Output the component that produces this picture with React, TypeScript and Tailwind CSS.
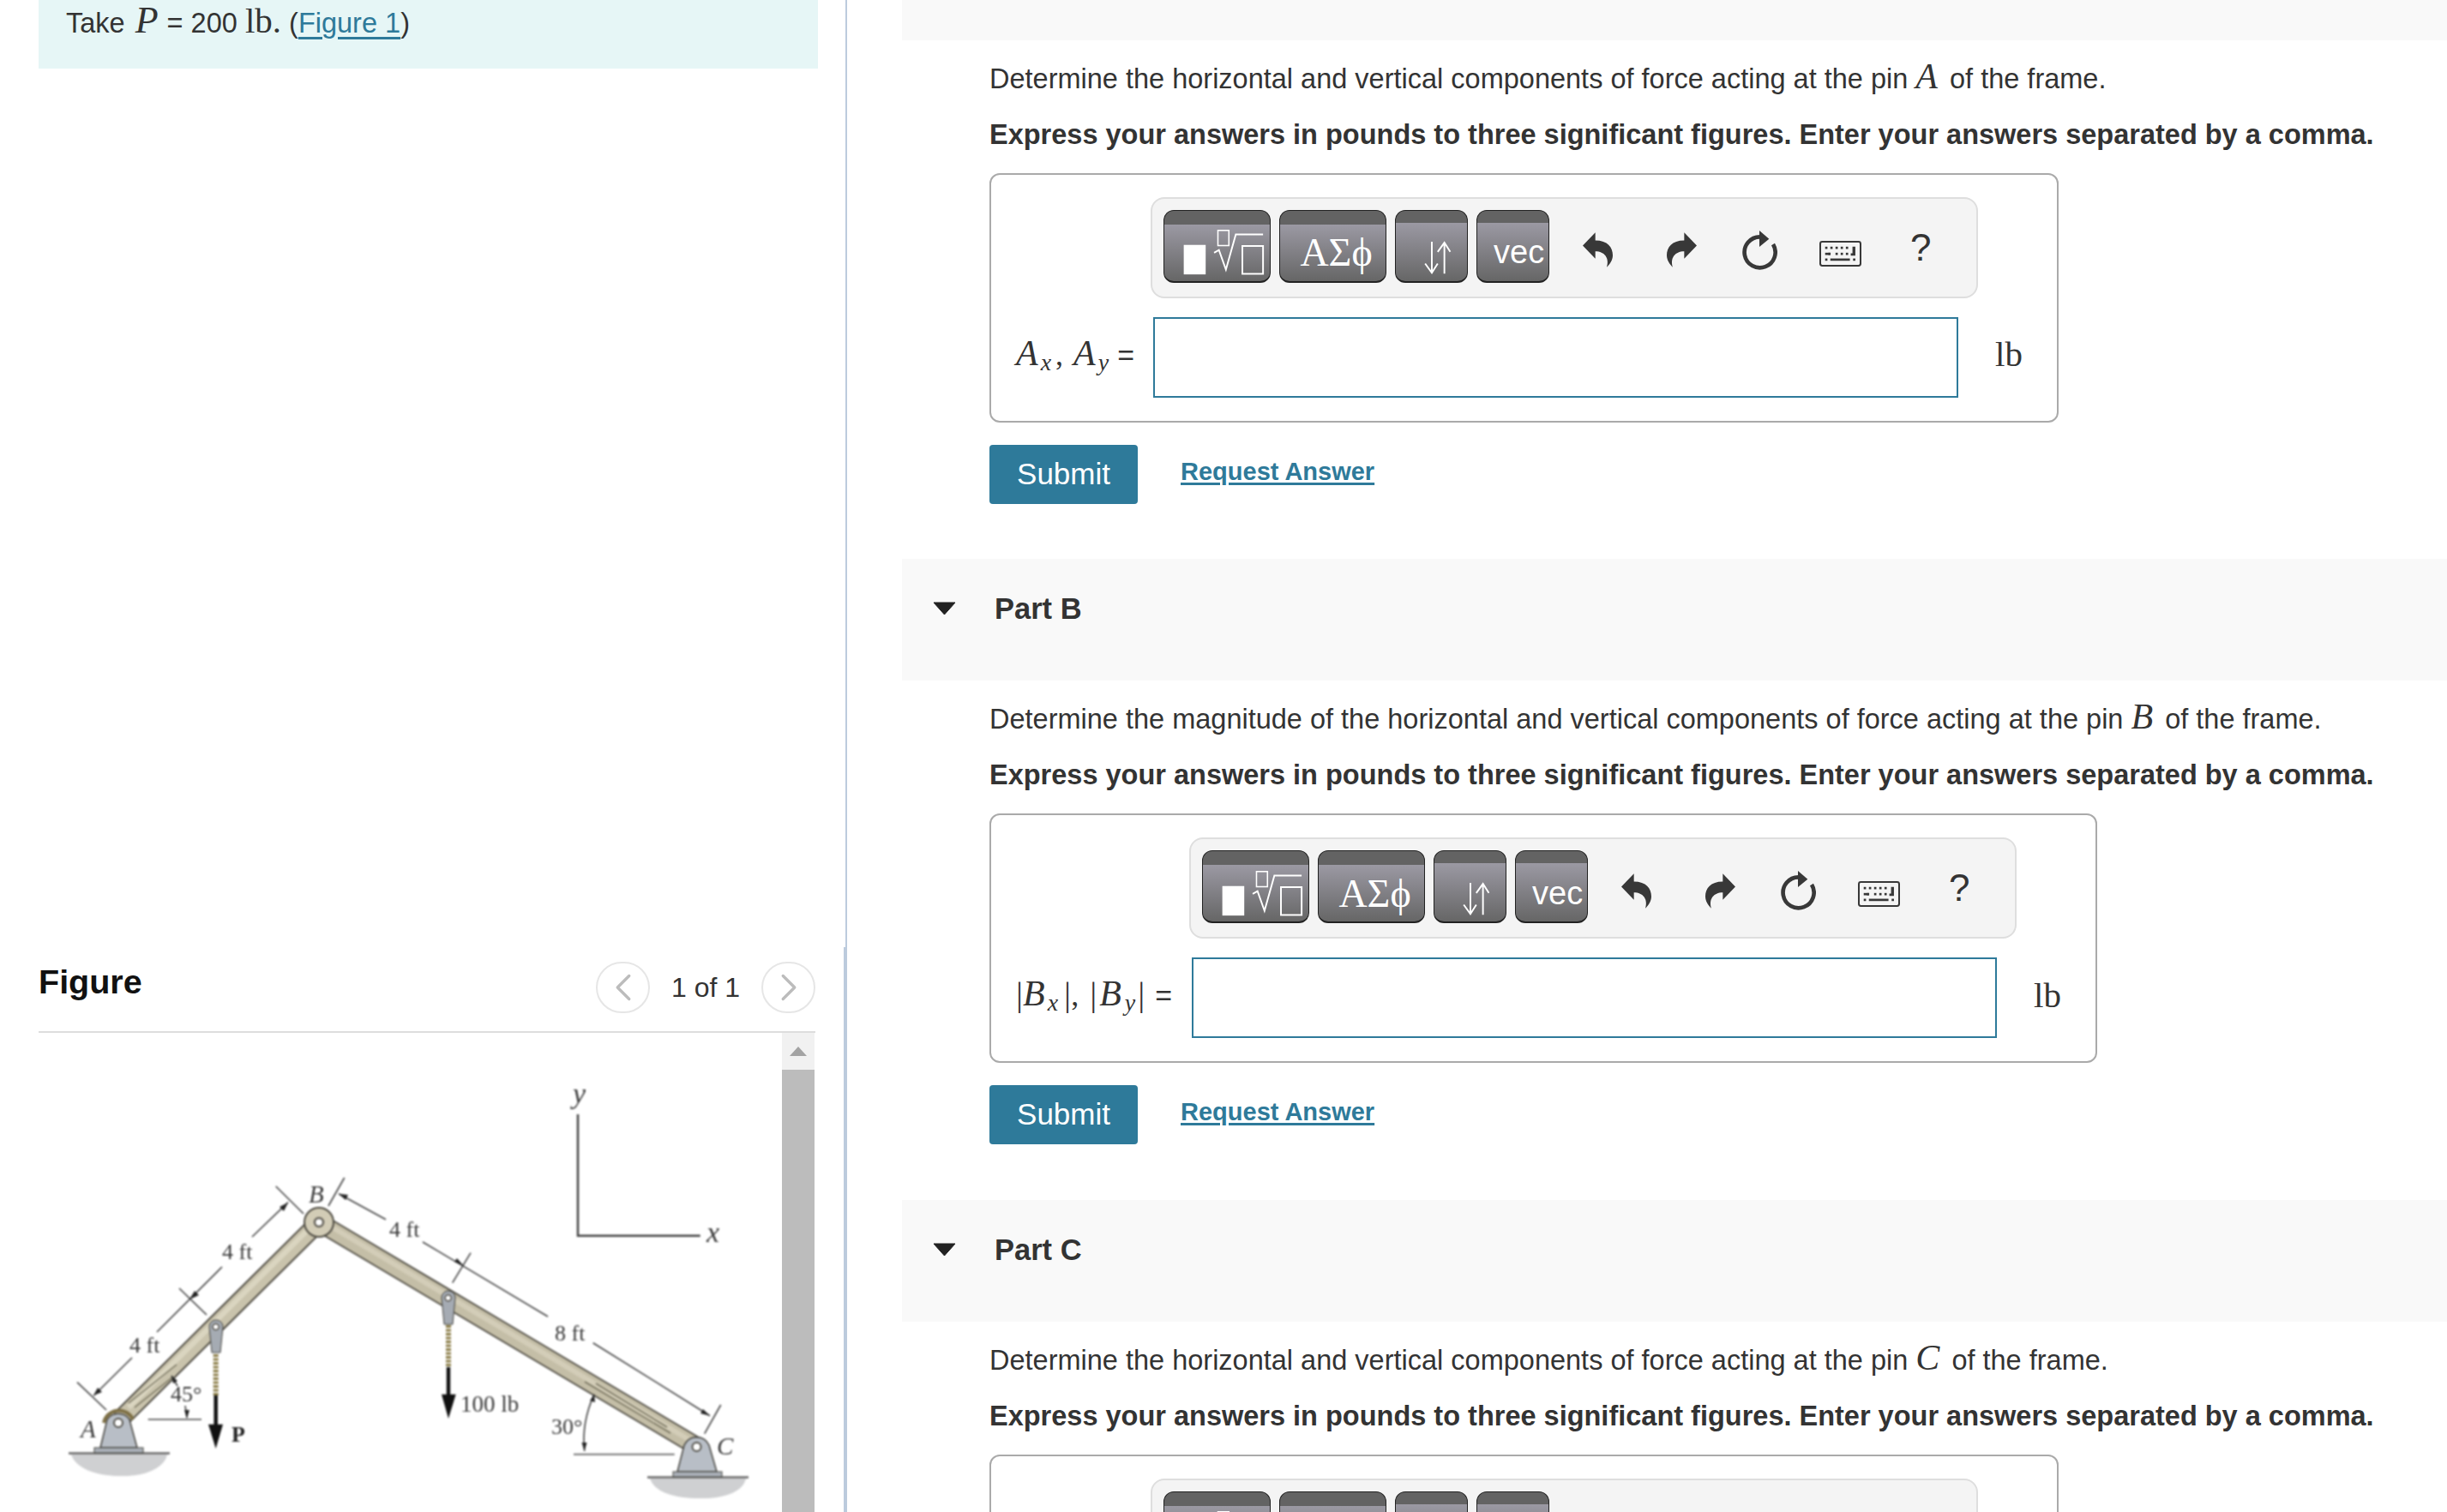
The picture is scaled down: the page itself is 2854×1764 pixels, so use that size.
import React from "react";
import { ChevronLeft, ChevronRight } from "lucide-react";

const Serif = ({ children, className = "" }: { children: React.ReactNode; className?: string }) => (
  <span className={`font-['Liberation_Serif'] ${className}`}>{children}</span>
);

const Mi = ({ children }: { children: React.ReactNode }) => (
  <span className="font-['Liberation_Serif'] italic text-[42px] leading-none">{children}</span>
);

const Sub = ({ children, className = "" }: { children: React.ReactNode; className?: string }) => (
  <span className={`font-['Liberation_Serif'] italic text-[28px] leading-none translate-y-[6px] ${className}`}>
    {children}
  </span>
);

const Bar = ({ className = "" }: { className?: string }) => (
  <span className={`font-['Liberation_Serif'] text-[40px] leading-none ${className}`}>|</span>
);

const btn =
  "h-[85px] rounded-[12px] border border-b-2 border-[#222] flex items-center shrink-0 text-white overflow-hidden";

const ToolButtons = () => (
  <div className="flex gap-[10px]">
    <div className={`${btn} w-[125px] bg-[linear-gradient(#636363_0_16px,#9b99a3_16px,#666666_100%)]`}>
      <svg width="125" height="85" viewBox="0 0 125 85" fill="none">
        <rect x="23" y="41.7" width="26" height="35" fill="#fff" />
        <rect x="63.5" y="24.5" width="13" height="18" stroke="#fff" strokeWidth="1.6" />
        <path d="M59 51 L64.7 47.7 L73 71 L84.7 29.3 H117" stroke="#fff" strokeWidth="2" />
        <rect x="92.5" y="43" width="24.5" height="33" stroke="#fff" strokeWidth="2" />
      </svg>
    </div>
    <div
      className={`${btn} w-[125px] pt-[16px] pl-[8px] justify-center bg-[linear-gradient(#636363_0_16px,#9b99a3_16px,#666666_100%)] font-['Liberation_Serif'] text-[46px]`}
    >
      ΑΣϕ
    </div>
    <div className={`${btn} w-[85px] bg-[linear-gradient(#636363_0_14px,#9b99a3_14px,#666666_100%)]`}>
      <svg width="85" height="85" viewBox="0 0 85 85" fill="none" stroke="#fff" strokeWidth="2">
        <path d="M43 38 V74 M35 64 L43 75 L50 64" />
        <path d="M58 76 V39 M50 50 L58 39 L65 50" />
      </svg>
    </div>
    <div
      className={`${btn} w-[85px] pl-[19px] pt-[16px] bg-[linear-gradient(#636363_0_14px,#9b99a3_14px,#666666_100%)] text-[38px]`}
    >
      vec
    </div>
  </div>
);

const Undo = ({ flip = false }: { flip?: boolean }) => (
  <svg
    width="35"
    height="41"
    viewBox="78 120 105 122"
    className={flip ? "-scale-x-100" : ""}
    fill="#383838"
  >
    <path d="M78 166 L122 120 V148 C165 148 183 172 183 200 C183 218 172 232 162 242 C172 210 155 186 122 186 V212 Z" />
  </svg>
);

const Refresh = () => (
  <svg width="41" height="46" viewBox="635 113 123 138" fill="none">
    <path d="M697 135 A54 54 0 1 0 743 161" stroke="#383838" strokeWidth="14" />
    <path d="M695 113 L729 142 L695 170 Z" fill="#383838" />
  </svg>
);

const Keyboard = () => (
  <svg width="49" height="30" viewBox="905 157 146 89" fill="#383838">
    <rect x="908" y="160" width="140" height="83" rx="7" fill="none" stroke="#383838" strokeWidth="6" />
    {[925, 943, 961, 979, 997].map((x) => (
      <rect key={x} x={x} y="177" width="8" height="8" />
    ))}
    <path d="M1020 177 h10 v31 h-16 v-8 h6 z" />
    {[925, 936, 961, 979, 997].map((x, i) => (
      <rect key={x} x={x} y="198" width={i === 0 ? 18 : 8} height="8" />
    ))}
    <rect x="925" y="218" width="8" height="8" />
    <rect x="943" y="218" width="68" height="8" />
    <rect x="1022" y="218" width="8" height="8" />
  </svg>
);

const Toolbar = () => (
  <div className="w-[965px] h-[118px] rounded-[16px] border-2 border-[#dedede] bg-[#f4f4f4] pl-[13px] pt-[13px] flex">
    <ToolButtons />
    <div className="h-[85px] flex items-center pt-[9px]">
      <div className="ml-[39px]">
        <Undo />
      </div>
      <div className="ml-[63px]">
        <Undo flip />
      </div>
      <div className="ml-[53px]">
        <Refresh />
      </div>
      <div className="ml-[49px] pt-[8px]">
        <Keyboard />
      </div>
      <div className="ml-[57px] text-[44px] leading-none pb-[6px] text-[#333]">?</div>
    </div>
  </div>
);

const LabelA = ({ l }: { l: string }) => (
  <span className="flex items-baseline whitespace-nowrap">
    <Mi>{l}</Mi>
    <Sub className="ml-[3px] mr-[5px]">x</Sub>
    <Serif className="text-[36px] mr-[12px]">,</Serif>
    <Mi>{l}</Mi>
    <Sub className="ml-[3px]">y</Sub>
    <span className="text-[34px] ml-[10px]">=</span>
  </span>
);

const LabelB = () => (
  <span className="flex items-baseline whitespace-nowrap">
    <Bar />
    <Mi>B</Mi>
    <Sub className="ml-[3px] mr-[7px]">x</Sub>
    <Bar />
    <Serif className="text-[36px] mr-[13px]">,</Serif>
    <Bar className="mr-[3px]" />
    <Mi>B</Mi>
    <Sub className="ml-[4px] mr-[3px]">y</Sub>
    <Bar />
    <span className="text-[34px] ml-[12px]">=</span>
  </span>
);

const Part = ({
  name,
  lead,
  pin,
  tail,
  label,
  wide = false,
  marginTop = "",
}: {
  name?: string;
  lead: string;
  pin: string;
  tail: string;
  label: React.ReactNode;
  wide?: boolean;
  marginTop?: string;
}) => (
  <section className={`${marginTop} pb-[64.5px]`}>
    <div className="h-[142px] bg-[#f9f9f9] pl-[36px] pt-[35px] flex items-start">
      {name && (
        <>
          <svg width="27" height="16" viewBox="0 0 27 16" className="mt-[15px] shrink-0" fill="#222">
            <path d="M1 1 H26 L13.5 15 Z" stroke="#222" strokeLinejoin="round" />
          </svg>
          <div className="ml-[45px] text-[34.5px] leading-[46px] font-bold">{name}</div>
        </>
      )}
    </div>
    <div className="pl-[102px]">
      <p className="mt-[21px] h-[46px] text-[32.5px] leading-[46px] whitespace-nowrap">
        {lead} <Mi>{pin}</Mi> <span className="ml-[5px]">{tail}</span>
      </p>
      <p className="mt-[20px] h-[46px] text-[32.5px] leading-[46px] font-bold whitespace-nowrap">
        Express your answers in pounds to three significant figures. Enter your answers separated by a comma.
      </p>
      <div
        className={`mt-[22px] h-[291px] rounded-[12px] border-2 border-[#aaaaaa] pt-[26px] ${
          wide ? "w-[1292px]" : "w-[1247px]"
        }`}
      >
        <div className={wide ? "ml-[231px]" : "ml-[186px]"}>
          <Toolbar />
        </div>
        <div className="mt-[22px] pl-[29px] flex items-center">
          <div className={`${wide ? "w-[205px]" : "w-[160px]"} shrink-0 pb-[6px]`}>{label}</div>
          <div className="w-[939px] h-[94px] border-2 border-[#2e7a9a] bg-white shrink-0" />
          <Serif className="ml-[43px] text-[41px] leading-none pb-[6px]">lb</Serif>
        </div>
      </div>
      <div className="mt-[26px] flex items-center">
        <div className="w-[173px] h-[69px] rounded-[4px] bg-[#2e7a9a] text-white text-[35px] flex items-center justify-center">
          Submit
        </div>
        <a className="ml-[50px] pb-[5px] text-[29px] font-bold text-[#2e7a9a] underline decoration-[3px] underline-offset-[3px]">
          Request Answer
        </a>
      </div>
    </div>
  </section>
);

const Figure = () => (
  <svg
    width="867"
    height="559"
    viewBox="45 1205 867 559"
    fill="none"
    className="shrink-0 blur-[0.8px] font-['Liberation_Serif']"
  >
    {/* grounds */}
    <path d="M83 1697 H195 C192 1712 170 1723 140 1722 C110 1722 88 1712 83 1697 Z" fill="#cfd0d2" />
    <path d="M758 1725 H870 C867 1740 845 1749 815 1748 C785 1748 763 1740 758 1725 Z" fill="#cfd0d2" />
    <path d="M80 1695.5 H198 M755 1723.5 H873" stroke="#6b6b6b" strokeWidth="2.5" />

    {/* members */}
    <path d="M140 1656 L372 1426 L812 1687" stroke="#4f4c43" strokeWidth="22" strokeLinejoin="miter" />
    <path d="M140 1656 L372 1426" stroke="#c9c3ac" strokeWidth="18" />
    <path d="M372 1426 L812 1687" stroke="#c4bea7" strokeWidth="18.5" />
    <path d="M150 1642 L362 1432" stroke="#dad5c0" strokeWidth="6" />
    <path d="M386 1431 L806 1681" stroke="#d3cdb8" strokeWidth="6" />
    <path d="M150 1637 L206 1592 M157 1642 L202 1606 M682 1612 L782 1672 M695 1614 L778 1665" stroke="#77735f" strokeWidth="1.5" />

    {/* pin B */}
    <circle cx="372" cy="1426" r="17" fill="#d2ccb6" stroke="#4f4c43" strokeWidth="2" />
    <circle cx="372" cy="1426" r="5" fill="#fff" stroke="#66635a" strokeWidth="2.5" />

    {/* supports */}
    <path d="M117 1689 L125 1656 A16 16 0 0 1 151 1656 L160 1689 Z" fill="#b8bec6" stroke="#45443f" strokeWidth="1.5" />
    <path d="M121 1660 A18 18 0 0 1 155 1656" stroke="#7d6f45" strokeWidth="4" />
    <rect x="110" y="1689" width="57" height="6" fill="#aab0b8" stroke="#45443f" strokeWidth="1" />
    <circle cx="138" cy="1660" r="5" fill="#fff" stroke="#55534c" strokeWidth="2" />
    <path d="M790 1717 L798 1686 A16 16 0 0 1 827 1686 L836 1717 Z" fill="#b8bec6" stroke="#45443f" strokeWidth="1.5" />
    <rect x="785" y="1717" width="57" height="6" fill="#aab0b8" stroke="#45443f" strokeWidth="1" />
    <circle cx="812.5" cy="1688" r="5" fill="#fff" stroke="#55534c" strokeWidth="2" />

    {/* hangers */}
    <path d="M244 1548 A8 8 0 0 1 260 1548 L257 1578 H247 Z" fill="#a5abb3" stroke="#45443f" strokeWidth="1" />
    <circle cx="251.7" cy="1548" r="3.5" fill="#fff" stroke="#55534c" strokeWidth="1.5" />
    <path d="M251.7 1580 V1628" stroke="#8d7f4a" strokeWidth="6" strokeDasharray="3 1.5" />
    <path d="M251.7 1628 V1664" stroke="#111" strokeWidth="4.5" />
    <path d="M243 1661.7 H260 L251.7 1690 Z" fill="#111" />
    <path d="M515 1514 A8 8 0 0 1 531 1514 L528 1545 H518 Z" fill="#a5abb3" stroke="#45443f" strokeWidth="1" />
    <circle cx="522.7" cy="1514.3" r="3.5" fill="#fff" stroke="#55534c" strokeWidth="1.5" />
    <path d="M523 1546 V1595" stroke="#8d7f4a" strokeWidth="6" strokeDasharray="3 1.5" />
    <path d="M523 1595 V1630" stroke="#111" strokeWidth="4.5" />
    <path d="M515 1626.7 H531.7 L523 1655 Z" fill="#111" />

    {/* dimension lines */}
    <g stroke="#444" strokeWidth="1.6">
      <path d="M90 1612.7 L124 1645 M109.3 1628.3 L154 1584 M183 1554 L259 1478 M209 1503 L241 1534" />
      <path d="M294 1443 L336 1402.7 M321.7 1384 L354 1416 M401.7 1374 L383 1407 M395 1392.7 L450 1422.7" />
      <path d="M493 1449 L639 1536 M549 1461.7 L527.7 1496.7 M691.7 1566.7 L828 1651.7 M840.7 1639 L821.7 1672.7" />
      <path d="M172.7 1656 H235 M669 1696.7 H786.7" stroke="#777" strokeWidth="2" />
      <path d="M200 1605 L207 1617 M216 1640 L218 1654" />
      <path d="M693 1626.7 Q678 1660 681.7 1693" />
    </g>
    <g fill="#222">
      <path d="M109 1628 L119 1624 L114 1619 Z" />
      <path d="M336 1403 L326 1408 L331 1413 Z" />
      <path d="M221 1516 L232 1511 L227 1506 Z" />
      <path d="M395 1392.7 L406 1394 L403 1400 Z" />
      <path d="M541 1477 L530 1472 L533 1468 Z" />
      <path d="M828 1651.7 L817 1649 L820 1644 Z" />
      <path d="M218 1655 L215 1645 L221 1645 Z" />
      <path d="M681.7 1693 L678.5 1683 L684.5 1683 Z" />
      <path d="M200 1605 L207 1611 L202 1614 Z" />
      <path d="M693 1626.7 L694 1636 L688 1634 Z" />
    </g>

    {/* axes */}
    <path d="M674 1300 V1441.7 H816.7" stroke="#444" strokeWidth="2.5" />

    {/* labels */}
    <g fill="#3a3a3a" fontSize="26">
      <text x="151" y="1578">4 ft</text>
      <text x="259" y="1469">4 ft</text>
      <text x="454" y="1443">4 ft</text>
      <text x="647" y="1564">8 ft</text>
      <text x="199" y="1635">45°</text>
      <text x="537" y="1647" fontSize="27">100 lb</text>
      <text x="643" y="1673">30°</text>
    </g>
    <g fill="#3a3a3a" fontStyle="italic" fontSize="29">
      <text x="94" y="1677">A</text>
      <text x="360" y="1403">B</text>
      <text x="836" y="1697">C</text>
      <text x="824" y="1449" fontSize="34">x</text>
      <text x="668" y="1287" fontSize="34">y</text>
    </g>
    <text x="270" y="1682" fill="#222" fontSize="26" fontWeight="700">P</text>
  </svg>
);

export default function App() {
  return (
    <div className="h-[1764px] w-[2854px] overflow-hidden flex bg-white text-[#333] font-['Liberation_Sans',sans-serif]">
      <aside className="w-[988px] h-full shrink-0 flex flex-col">
        <div className="h-[1105px] border-r-2 border-[#bccbdd] pl-[45px]">
          <div className="w-[909px] h-[80px] bg-[#e6f6f6] pl-[32px] pt-[2px] text-[32.5px] leading-[50px] whitespace-nowrap">
            Take <span className="font-['Liberation_Serif'] italic text-[44px] leading-none ml-[3px] mr-[1px]">P</span> = 200{" "}
            <Serif className="text-[41px] leading-none">lb.</Serif> (
            <a className="text-[#2e7a9a] underline decoration-[3px] underline-offset-[5px]">Figure 1</a>)
          </div>
        </div>
        <div className="flex-1 border-r-4 border-[#bccbdd] pl-[45px] pt-[16px]">
          <div className="w-[906px]">
            <div className="h-[84px] border-b-2 border-[#dddddd] flex items-start justify-between">
              <h2 className="font-bold text-[39.5px] leading-[48px] text-[#111]">Figure</h2>
              <div className="w-[256px] mt-[1px] flex items-center justify-between">
                <div className="w-[63px] h-[60px] rounded-full border-2 border-[#e6e6e6] flex items-center justify-center">
                  <ChevronLeft size={54} strokeWidth={1.5} color="#bcbcbc" />
                </div>
                <span className="text-[32px]">1 of 1</span>
                <div className="w-[63px] h-[60px] rounded-full border-2 border-[#e6e6e6] flex items-center justify-center">
                  <ChevronRight size={54} strokeWidth={1.5} color="#bcbcbc" />
                </div>
              </div>
            </div>
            <div className="flex">
              <Figure />
              <div className="w-[38px] h-[559px] bg-[#bcbcbc] shrink-0">
                <div className="h-[43px] bg-[#f1f1f1] flex items-center justify-center">
                  <svg width="20" height="11" viewBox="0 0 20 11" fill="#a3a3a3">
                    <path d="M10 0 L20 11 H0 Z" />
                  </svg>
                </div>
              </div>
            </div>
          </div>
        </div>
      </aside>
      <main className="flex-1 min-w-0 pl-[64px]">
        <Part
          marginTop="mt-[-95.5px]"
          lead="Determine the horizontal and vertical components of force acting at the pin"
          pin="A"
          tail="of the frame."
          label={<LabelA l="A" />}
        />
        <Part
          name="Part B"
          wide
          lead="Determine the magnitude of the horizontal and vertical components of force acting at the pin"
          pin="B"
          tail="of the frame."
          label={<LabelB />}
        />
        <Part
          name="Part C"
          lead="Determine the horizontal and vertical components of force acting at the pin"
          pin="C"
          tail="of the frame."
          label={<LabelA l="C" />}
        />
      </main>
    </div>
  );
}
